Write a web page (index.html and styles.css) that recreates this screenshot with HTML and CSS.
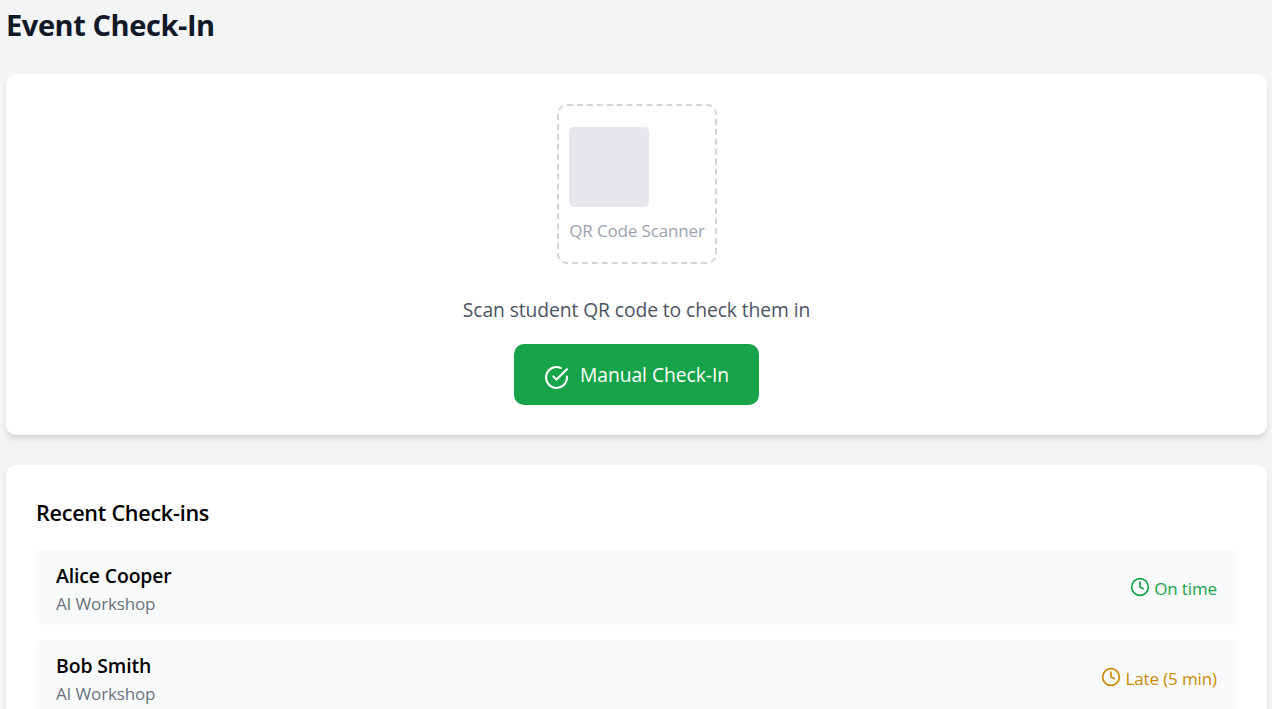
FILE: index.html
```html
<!DOCTYPE html>
<html lang="en">
<head>
<meta charset="utf-8">
<title>Event Check-In</title>
<link rel="stylesheet" href="styles.css">
</head>
<body>
<main class="page">
  <h1 class="title">Event Check-In</h1>
  <section class="card scanner">
    <div class="frame">
      <div class="frame-content">
        <div class="code"></div>
        <p class="frame-label">QR Code Scanner</p>
      </div>
    </div>
    <p class="hint">Scan student QR code to check them in</p>
    <button class="manual" type="button">
      <svg class="manual-icon" viewBox="0 0 24 24"><path d="M22 11.08V12a10 10 0 1 1-5.93-9.14"/><path d="m9 11 3 3L22 4"/></svg>
      <span>Manual Check-In</span>
    </button>
  </section>
  <section class="card recent">
    <h2 class="heading">Recent Check-ins</h2>
    <ul class="list">
      <li class="row">
        <div class="person">
          <p class="name">Alice Cooper</p>
          <p class="event">AI Workshop</p>
        </div>
        <div class="status on-time">
          <svg class="clock" viewBox="0 0 24 24"><circle cx="12" cy="12" r="10"/><path d="M12 6v6l4 2"/></svg>
          <span class="status-text">On time</span>
        </div>
      </li>
      <li class="row">
        <div class="person">
          <p class="name">Bob Smith</p>
          <p class="event">AI Workshop</p>
        </div>
        <div class="status late">
          <svg class="clock" viewBox="0 0 24 24"><circle cx="12" cy="12" r="10"/><path d="M12 6v6l4 2"/></svg>
          <span class="status-text">Late (5 min)</span>
        </div>
      </li>
    </ul>
  </section>
</main>
</body>
</html>
```

FILE: styles.css
```css
* { box-sizing: border-box; margin: 0; padding: 0; }
html { overflow: hidden; }
body {
  height: 709px;
  overflow: hidden;
  background: #f3f4f6;
  color: #000;
  font-family: "Open Sans", sans-serif;
}
svg { fill: none; stroke: currentColor; stroke-width: 2; stroke-linecap: round; stroke-linejoin: round; flex: none; }
.page { padding: 5px 5px 0 6px; }
.title {
  margin-bottom: 29px;
  color: #111827;
  font-size: 29px;
  font-weight: 700;
  line-height: 40px;
  letter-spacing: -0.42px;
}
.card {
  padding: 30px;
  border-radius: 10px;
  background: #fff;
  box-shadow: 0 5px 7.5px -1.25px rgba(0, 0, 0, .1), 0 2.5px 5px -2.5px rgba(0, 0, 0, .1);
}
.scanner { display: flex; flex-direction: column; align-items: center; height: 361px; margin-bottom: 30px; }
.frame {
  display: flex;
  justify-content: center;
  width: 160px;
  height: 160px;
  padding: 21px 0 0 1px;
  border: 2px dashed #d1d5db;
  border-radius: 10px;
}
.code { width: 80px; height: 80px; margin-bottom: 11px; border-radius: 5px; background: #e5e7eb; }
.frame-label { color: #9ca3af; font-size: 17px; line-height: 25px; letter-spacing: -0.14px; }
.hint { margin: 31px 0 19px; color: #4b5563; font-size: 19.3px; line-height: 30px; letter-spacing: -0.09px; }
.manual {
  display: flex;
  align-items: center;
  gap: 11px;
  width: 245px;
  height: 61px;
  padding: 0 30px;
  border: 0;
  border-radius: 10px;
  background: #16a34a;
  color: #fff;
  font: 400 19.3px/30px "Open Sans", sans-serif;
  letter-spacing: -0.06px;
  white-space: nowrap;
}
.manual-icon { width: 25px; height: 25px; margin-top: 5px; }
.heading { margin-bottom: 20px; font-size: 21.6px; font-weight: 600; line-height: 35px; letter-spacing: -0.27px; }
.list { display: grid; gap: 15px; list-style: none; }
.row {
  display: flex;
  align-items: center;
  justify-content: space-between;
  height: 75px;
  padding: 10px 20px;
  border-radius: 5px;
  background: #f9fafb;
}
.person { padding-top: 2px; }
.name { font-size: 19.4px; font-weight: 600; line-height: 30px; letter-spacing: -0.12px; }
.event { color: #6b7280; font-size: 17px; line-height: 25px; letter-spacing: -0.14px; }
.status { display: flex; align-items: center; gap: 4px; font-size: 17px; line-height: 25px; letter-spacing: -0.12px; }
.clock { width: 20px; height: 20px; margin-top: -1px; }
.status-text { padding-top: 1px; }
.on-time { color: #16a34a; }
.late { color: #ca8a04; }
```
